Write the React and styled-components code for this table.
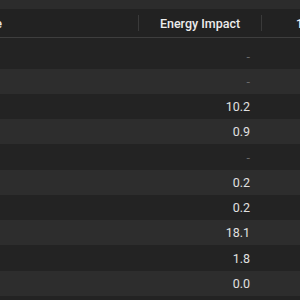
import styled, { createGlobalStyle } from 'styled-components';

const rows = ['-', '-', '10.2', '0.9', '-', '0.2', '0.2', '18.1', '1.8', '0.0', ''];

function App() {
  return (
    <>
      <GlobalStyle />
      <Window>
        <TitleBar />
        <Header>
          <NameHead>Process Name</NameHead>
          <Divider />
          <HeadCell>Energy Impact</HeadCell>
          <Divider />
          <PowerHead>12 hr Power</PowerHead>
        </Header>
        <Body>
          {rows.map((value, i) => (
            <Row key={i} $striped={i % 2 === 1}>
              <NameCell />
              <ValueCell $empty={value === '-'}>{value}</ValueCell>
              <PowerCell />
            </Row>
          ))}
        </Body>
      </Window>
    </>
  )
}

const GlobalStyle = createGlobalStyle`
    html, body {
        margin: 0;
        padding: 0;
        background: #232323;
    }
`

const Window = styled.div`
    width: 300px;
    height: 300px;
    overflow: hidden;
    background: #232323;
    font-family: Roboto, "Liberation Sans", Arial, sans-serif;
    display: flex;
    flex-direction: column;
`

const TitleBar = styled.div`
    height: 9px;
    flex-shrink: 0;
    background: #2c2c2c;
`

const Header = styled.div`
    height: 28px;
    flex-shrink: 0;
    display: flex;
    align-items: center;
    background: #222222;
    border-bottom: 1px solid #3e3e3e;
    color: #ececec;
    font-size: 12.5px;
    font-weight: 500;
`

const NameHead = styled.div`
    width: 138px;
    flex-shrink: 0;
    display: flex;
    justify-content: flex-end;
    white-space: nowrap;
    overflow: hidden;
    padding-right: 136px;
    box-sizing: border-box;
`

const HeadCell = styled.div`
    width: 122px;
    flex-shrink: 0;
    text-align: center;
    white-space: nowrap;
`

const PowerHead = styled.div`
    flex: 1;
    white-space: nowrap;
    overflow: hidden;
    padding-left: 34px;
`

const Divider = styled.div`
    width: 1px;
    height: 16px;
    flex-shrink: 0;
    background: #3a3a3a;
`

const Body = styled.div`
    padding-top: 5.4px;
`

const Row = styled.div`
    height: 25.25px;
    display: flex;
    align-items: center;
    background: ${p => p.$striped ? '#2d2d2d' : '#232323'};
`

const NameCell = styled.div`
    width: 139px;
    flex-shrink: 0;
`

const ValueCell = styled.div`
    width: 122px;
    flex-shrink: 0;
    box-sizing: border-box;
    padding-right: 11px;
    text-align: right;
    font-size: 12.5px;
    color: ${p => p.$empty ? '#6a6a6a' : '#e0e0e0'};
`

const PowerCell = styled.div`
    flex: 1;
`

export default App
